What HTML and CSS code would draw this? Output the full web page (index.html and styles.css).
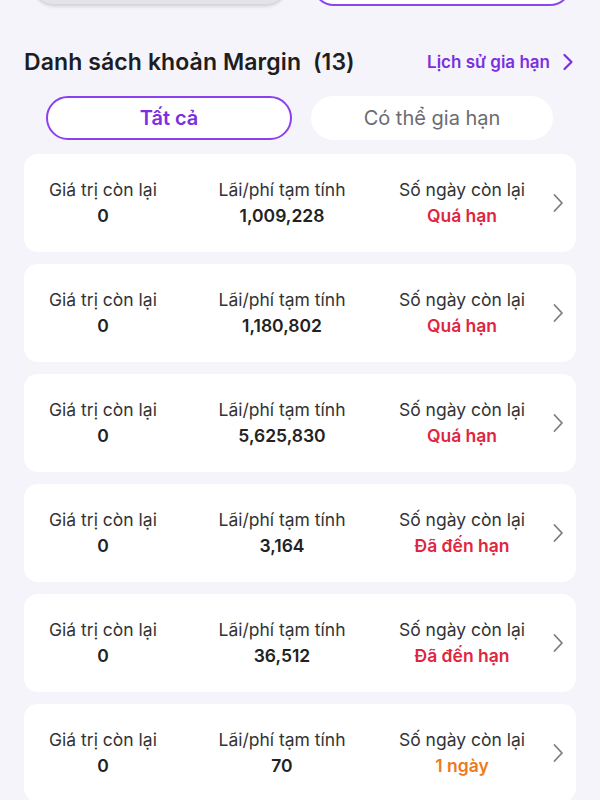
FILE: index.html
```html
<!DOCTYPE html>
<html lang="vi">
<head>
<meta charset="utf-8">
<link rel="stylesheet" href="styles.css">
</head>
<body>
<div class="page">
  <div class="top-actions">
    <div class="top-btn top-btn-gray"></div>
    <div class="top-btn top-btn-outline"></div>
  </div>

  <div class="section-head">
    <h2 class="title">Danh sách khoản Margin&nbsp; (13)</h2>
    <a class="history">Lịch sử gia hạn
      <svg class="history-chev" width="12" height="18" viewBox="0 0 12 18"><path d="M2.5 2 L9.5 9 L2.5 16" fill="none" stroke="currentColor" stroke-width="2.2" stroke-linecap="round" stroke-linejoin="round"/></svg>
    </a>
  </div>

  <div class="tabs">
    <div class="tab tab-active">Tất cả</div>
    <div class="tab">Có thể gia hạn</div>
  </div>

  <div class="list">
    <div class="card">
      <div class="col col1"><div class="label">Giá trị còn lại</div><div class="value">0</div></div>
      <div class="col col2"><div class="label">Lãi/phí tạm tính</div><div class="value">1,009,228</div></div>
      <div class="col col3"><div class="label">Số ngày còn lại</div><div class="value red">Quá hạn</div></div>
      <svg class="chev" width="12" height="20" viewBox="0 0 12 20"><path d="M2.5 2 L10 10 L2.5 18" fill="none" stroke="currentColor" stroke-width="1.8" stroke-linecap="round" stroke-linejoin="round"/></svg>
    </div>
    <div class="card">
      <div class="col col1"><div class="label">Giá trị còn lại</div><div class="value">0</div></div>
      <div class="col col2"><div class="label">Lãi/phí tạm tính</div><div class="value">1,180,802</div></div>
      <div class="col col3"><div class="label">Số ngày còn lại</div><div class="value red">Quá hạn</div></div>
      <svg class="chev" width="12" height="20" viewBox="0 0 12 20"><path d="M2.5 2 L10 10 L2.5 18" fill="none" stroke="currentColor" stroke-width="1.8" stroke-linecap="round" stroke-linejoin="round"/></svg>
    </div>
    <div class="card">
      <div class="col col1"><div class="label">Giá trị còn lại</div><div class="value">0</div></div>
      <div class="col col2"><div class="label">Lãi/phí tạm tính</div><div class="value">5,625,830</div></div>
      <div class="col col3"><div class="label">Số ngày còn lại</div><div class="value red">Quá hạn</div></div>
      <svg class="chev" width="12" height="20" viewBox="0 0 12 20"><path d="M2.5 2 L10 10 L2.5 18" fill="none" stroke="currentColor" stroke-width="1.8" stroke-linecap="round" stroke-linejoin="round"/></svg>
    </div>
    <div class="card">
      <div class="col col1"><div class="label">Giá trị còn lại</div><div class="value">0</div></div>
      <div class="col col2"><div class="label">Lãi/phí tạm tính</div><div class="value">3,164</div></div>
      <div class="col col3"><div class="label">Số ngày còn lại</div><div class="value red">Đã đến hạn</div></div>
      <svg class="chev" width="12" height="20" viewBox="0 0 12 20"><path d="M2.5 2 L10 10 L2.5 18" fill="none" stroke="currentColor" stroke-width="1.8" stroke-linecap="round" stroke-linejoin="round"/></svg>
    </div>
    <div class="card">
      <div class="col col1"><div class="label">Giá trị còn lại</div><div class="value">0</div></div>
      <div class="col col2"><div class="label">Lãi/phí tạm tính</div><div class="value">36,512</div></div>
      <div class="col col3"><div class="label">Số ngày còn lại</div><div class="value red">Đã đến hạn</div></div>
      <svg class="chev" width="12" height="20" viewBox="0 0 12 20"><path d="M2.5 2 L10 10 L2.5 18" fill="none" stroke="currentColor" stroke-width="1.8" stroke-linecap="round" stroke-linejoin="round"/></svg>
    </div>
    <div class="card">
      <div class="col col1"><div class="label">Giá trị còn lại</div><div class="value">0</div></div>
      <div class="col col2"><div class="label">Lãi/phí tạm tính</div><div class="value">70</div></div>
      <div class="col col3"><div class="label">Số ngày còn lại</div><div class="value orange">1 ngày</div></div>
      <svg class="chev" width="12" height="20" viewBox="0 0 12 20"><path d="M2.5 2 L10 10 L2.5 18" fill="none" stroke="currentColor" stroke-width="1.8" stroke-linecap="round" stroke-linejoin="round"/></svg>
    </div>
  </div>
</div>
</body>
</html>
```

FILE: styles.css
```css
* { box-sizing: border-box; }
html, body {
  margin: 0;
  padding: 0;
  background: #f5f4fa;
}
body {
  font-family: Inter, "Noto Sans", "DejaVu Sans", sans-serif;
  color: #222;
  height: 800px;
  overflow: hidden;
}
.page {
  padding: 0 24px;
}
.top-actions {
  display: flex;
  gap: 24px;
  height: 9px;
  overflow: hidden;
  padding: 0 4px 3px 8px;
  align-items: flex-end;
}
.top-btn {
  flex: 1;
  height: 44px;
  border-radius: 22px;
  flex-shrink: 0;
}
.top-btn-gray {
  background: #e4e4e8;
  box-shadow: 0 2px 2px rgba(0,0,0,0.06), inset 0 -2px 0 #d8d8dd;
}
.top-btn-outline {
  border: 2px solid #8b46ec;
  background: #fff;
}
.section-head {
  display: flex;
  align-items: center;
  justify-content: space-between;
  margin-top: 33px;
  height: 40px;
}
.title {
  margin: 0;
  font-size: 23px;
  font-weight: 600;
  color: #1e1e22;
  letter-spacing: 0.1px;
}
.history {
  display: flex;
  align-items: center;
  gap: 12px;
  color: #7b2fe0;
  font-size: 17px;
  font-weight: 600;
  padding-right: 2px;
}
.history-chev { color: #7b2fe0; }
.tabs {
  display: flex;
  gap: 19px;
  margin-top: 14px;
  padding: 0 23px 0 22px;
}
.tab {
  flex: 1;
  height: 44px;
  border-radius: 22px;
  background: #fff;
  display: flex;
  align-items: center;
  justify-content: center;
  font-size: 20px;
  color: #6b6b70;
}
.tab-active {
  border: 2px solid #8a3ff0;
  color: #7b2fe0;
  font-weight: 600;
}
.list {
  display: flex;
  flex-direction: column;
  gap: 12px;
  margin-top: 14px;
}
.card {
  background: #fff;
  border-radius: 14px;
  height: 98px;
  display: flex;
  align-items: center;
  padding: 0 12px 0 0;
}
.col {
  display: flex;
  flex-direction: column;
  align-items: center;
  gap: 4px;
}
.col1 { width: 158px; }
.col2 { width: 200px; }
.col3 { width: 160px; }
.label {
  font-size: 17.5px;
  color: #333336;
  line-height: 22px;
}
.value {
  font-size: 17.5px;
  font-weight: 600;
  color: #222;
  line-height: 22px;
}
.red { color: #e0263f; }
.orange { color: #ec7a1c; }
.chev {
  color: #7d7d82;
  margin-left: auto;
  margin-right: 0;
}
```
